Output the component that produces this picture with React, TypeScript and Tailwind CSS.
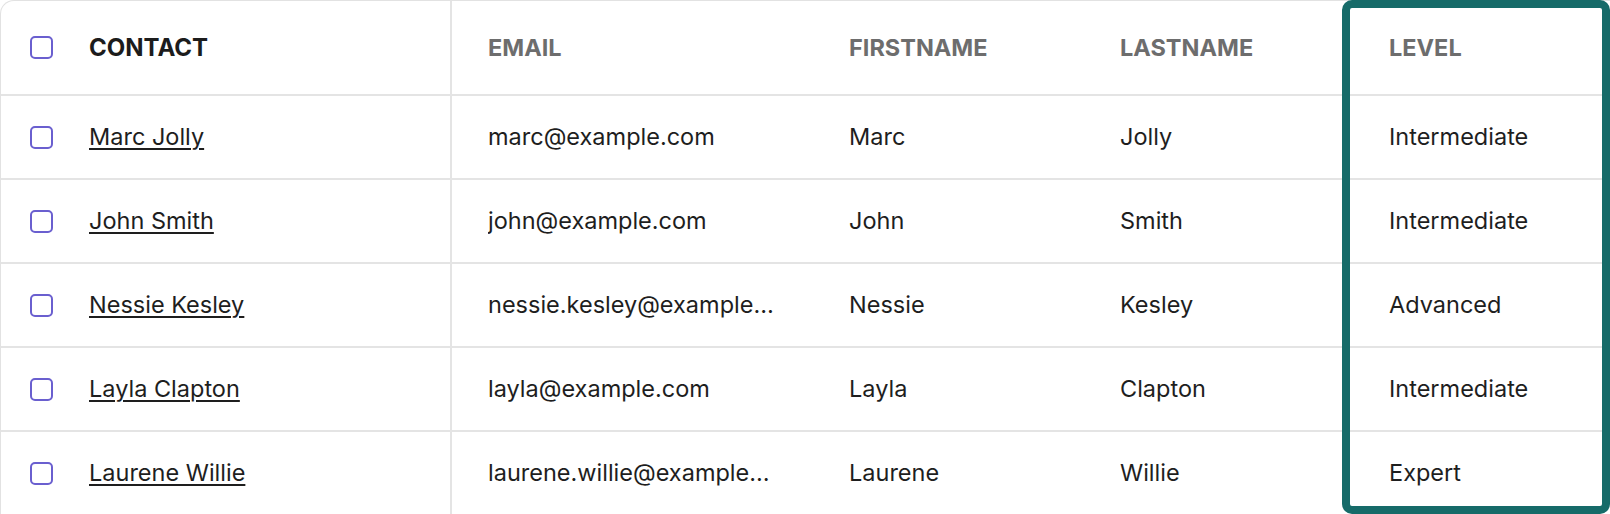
const contacts = [
  { name: "Marc Jolly", email: "marc@example.com", first: "Marc", last: "Jolly", level: "Intermediate" },
  { name: "John Smith", email: "john@example.com", first: "John", last: "Smith", level: "Intermediate" },
  { name: "Nessie Kesley", email: "nessie.kesley@example.com", first: "Nessie", last: "Kesley", level: "Advanced" },
  { name: "Layla Clapton", email: "layla@example.com", first: "Layla", last: "Clapton", level: "Intermediate" },
  { name: "Laurene Willie", email: "laurene.willie@example.com", first: "Laurene", last: "Willie", level: "Expert" },
]

const cols = "grid grid-cols-[451px_360px_271px_269px_1fr]"

function Checkbox() {
  return <span className="block h-[23px] w-[23px] shrink-0 rounded-[5px] border-2 border-[#6a5fcf] bg-white" />
}

export default function App() {
  return (
    <div className="relative h-[514px] w-[1610px] overflow-hidden bg-white font-['Inter',sans-serif] text-[23.5px]">
      <div className="w-[1640px] rounded-tl-[14px] border-l border-t border-[#e2e2e2]">
        {/* header */}
        <div className={`${cols} h-[95px] border-b-2 border-[#e4e4e4] font-bold uppercase`}>
          <div className="flex items-center gap-[36px] border-r-2 border-[#e4e4e4] pl-[29px]">
            <Checkbox />
            <span className="text-[24px] text-[#1c1c1c]">Contact</span>
          </div>
          <div className="flex items-center pl-[36px] text-[#6d6d6d]">Email</div>
          <div className="flex items-center pl-[37px] text-[#6d6d6d]">Firstname</div>
          <div className="flex items-center pl-[37px] text-[#6d6d6d]">Lastname</div>
          <div className="flex items-center pl-[37px] text-[#6d6d6d]">Level</div>
        </div>

        {contacts.map((c) => (
          <div key={c.email} className={`${cols} h-[84px] border-b-2 border-[#e4e4e4] text-[#1e1e1e]`}>
            <div className="flex items-center gap-[36px] border-r-2 border-[#e4e4e4] pl-[29px]">
              <Checkbox />
              <a className="underline decoration-[1.5px] underline-offset-[3px]">{c.name}</a>
            </div>
            <div className="flex min-w-0 items-center pl-[36px] pr-[36px]">
              <span className="truncate">{c.email}</span>
            </div>
            <div className="flex items-center pl-[37px]">{c.first}</div>
            <div className="flex items-center pl-[37px]">{c.last}</div>
            <div className="flex items-center pl-[37px]">{c.level}</div>
          </div>
        ))}
      </div>

      {/* highlighted column */}
      <div className="pointer-events-none absolute left-[1342px] top-0 h-[514px] w-[268px] rounded-[10px] border-[8px] border-[#166b69]" />
    </div>
  )
}
